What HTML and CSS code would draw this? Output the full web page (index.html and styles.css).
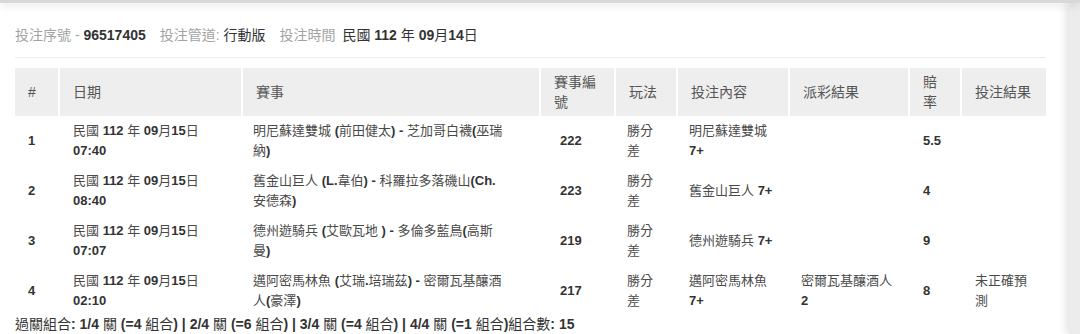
FILE: index.html
```html
<!DOCTYPE html>
<html lang="zh-Hant">
<head>
<meta charset="utf-8">
<title>投注明細</title>
<link rel="stylesheet" href="styles.css">
</head>
<body>
<div class="topbar"></div>
<div class="frame">
  <main class="card">
    <div class="meta">
      <span class="group"><span class="label">投注序號 - </span><b class="value">96517405</b></span>
      <span class="group"><span class="label">投注管道: </span><span class="value">行動版</span></span>
      <span class="group"><span class="label label-wide">投注時間 </span><span class="value">民國 <b>112</b> 年 <b>09</b>月<b>14</b>日</span></span>
    </div>
    <hr class="rule">
    <table class="bets">
      <colgroup>
        <col class="c-no"><col class="c-date"><col class="c-match"><col class="c-id"><col class="c-play"><col class="c-pick"><col class="c-result"><col class="c-odds"><col class="c-outcome">
      </colgroup>
      <thead>
        <tr>
          <th>#</th><th>日期</th><th>賽事</th><th>賽事編號</th><th>玩法</th><th>投注內容</th><th>派彩結果</th><th>賠率</th><th>投注結果</th>
        </tr>
      </thead>
      <tbody>
        <tr>
          <td><b>1</b></td>
          <td>民國 <b>112</b> 年 <b>09</b>月<b>15</b>日<br><b>07:40</b></td>
          <td class="match">明尼蘇達雙城<b> (</b>前田健太<b>) - </b>芝加哥白襪<b>(</b>巫瑞納<b>)</b></td>
          <td class="num"><b>222</b></td>
          <td>勝分差</td>
          <td>明尼蘇達雙城<b> 7+</b></td>
          <td></td>
          <td><b>5.5</b></td>
          <td></td>
        </tr>
        <tr>
          <td><b>2</b></td>
          <td>民國 <b>112</b> 年 <b>09</b>月<b>15</b>日<br><b>08:40</b></td>
          <td class="match">舊金山巨人<b> (L.</b>韋伯<b>) - </b>科羅拉多落磯山<b>(Ch.</b>安德森<b>)</b></td>
          <td class="num"><b>223</b></td>
          <td>勝分差</td>
          <td>舊金山巨人<b> 7+</b></td>
          <td></td>
          <td><b>4</b></td>
          <td></td>
        </tr>
        <tr>
          <td><b>3</b></td>
          <td>民國 <b>112</b> 年 <b>09</b>月<b>15</b>日<br><b>07:07</b></td>
          <td class="match">德州遊騎兵<b> (</b>艾歐瓦地<b> ) - </b>多倫多藍鳥<b>(</b>高斯曼<b>)</b></td>
          <td class="num"><b>219</b></td>
          <td>勝分差</td>
          <td>德州遊騎兵<b> 7+</b></td>
          <td></td>
          <td><b>9</b></td>
          <td></td>
        </tr>
        <tr>
          <td><b>4</b></td>
          <td>民國 <b>112</b> 年 <b>09</b>月<b>15</b>日<br><b>02:10</b></td>
          <td class="match">邁阿密馬林魚<b> (</b>艾瑞<b>.</b>培瑞茲<b>) - </b>密爾瓦基釀酒人<b>(</b>豪澤<b>)</b></td>
          <td class="num"><b>217</b></td>
          <td>勝分差</td>
          <td>邁阿密馬林魚<b> 7+</b></td>
          <td>密爾瓦基釀酒人<b> 2</b></td>
          <td><b>8</b></td>
          <td>未正確預測</td>
        </tr>
      </tbody>
    </table>
    <p class="summary">過關組合<b>: 1/4 </b>關<b> (=4 </b>組合<b>) | 2/4 </b>關<b> (=6 </b>組合<b>) | 3/4 </b>關<b> (=4 </b>組合<b>) | 4/4 </b>關<b> (=1 </b>組合<b>)</b>組合數<b>: 15</b></p>
  </main>
  <div class="rail"></div>
</div>
</body>
</html>
```

FILE: styles.css
```css
html, body {
  margin: 0;
  padding: 0;
  background: #ffffff;
  height: 100%;
  overflow: hidden;
}

body {
  font-family: "Liberation Sans", Arial, "Noto Sans CJK TC", sans-serif;
  color: #444;
}

b {
  font-weight: 700;
}

.topbar {
  height: 3px;
  background: #d8d8d8;
  box-shadow: 0 2px 8px rgba(0, 0, 0, 0.18);
  position: relative;
  z-index: 2;
}

.frame {
  display: flex;
  height: calc(100% - 3px);
}

.card {
  flex: 1;
  padding: 22px 22px 0 15px;
  background: #fff;
}

.rail {
  width: 12px;
  background: #ececec;
  box-shadow: -3px 0 9px rgba(0, 0, 0, 0.12);
  position: relative;
  z-index: 1;
}

.meta {
  display: flex;
  gap: 14px;
  font-size: 14px;
  line-height: 20px;
  white-space: nowrap;
}

.label {
  color: #a3a3a3;
}

.label-wide {
  margin-right: 3px;
}

.value {
  color: #333;
}

.rule {
  margin: 12px 0 10px;
  border: 0;
  border-top: 1px solid #ececec;
  width: 1031px;
}

.bets {
  border-collapse: collapse;
  table-layout: fixed;
  width: 1031px;
}

.c-no { width: 44px; }
.c-date { width: 183px; }
.c-match { width: 298px; }
.c-id { width: 75px; }
.c-play { width: 62px; }
.c-pick { width: 112px; }
.c-result { width: 120px; }
.c-odds { width: 52px; }
.c-outcome { width: 85px; }

.bets th {
  background: #eeeeee;
  color: #555;
  font-weight: 400;
  font-size: 14px;
  line-height: 20px;
  height: 48px;
  padding: 4px 12px 4px 13px;
  text-align: left;
  vertical-align: middle;
  border-right: 2px solid #fff;
  box-sizing: border-box;
}

.bets th:last-child {
  border-right: 0;
}

.bets td {
  font-size: 13px;
  line-height: 20px;
  padding: 5px 8px 5px 13px;
  vertical-align: middle;
  color: #4a4a4a;
  border-right: 2px solid transparent;
}

.bets td b {
  color: #333;
}

.bets td.match {
  padding-left: 10px;
  padding-right: 35px;
}

.bets td.num {
  padding-left: 19px;
}

.bets td:nth-child(5) {
  padding-left: 11px;
  padding-right: 18px;
}

.bets td:nth-child(6) {
  padding-left: 11px;
}

.bets td:nth-child(7) {
  padding-left: 11px;
}

.bets td:nth-child(9) {
  padding-right: 12px;
}

.summary {
  margin: 0;
  font-size: 14px;
  line-height: 16px;
  color: #333;
  white-space: nowrap;
}
```
